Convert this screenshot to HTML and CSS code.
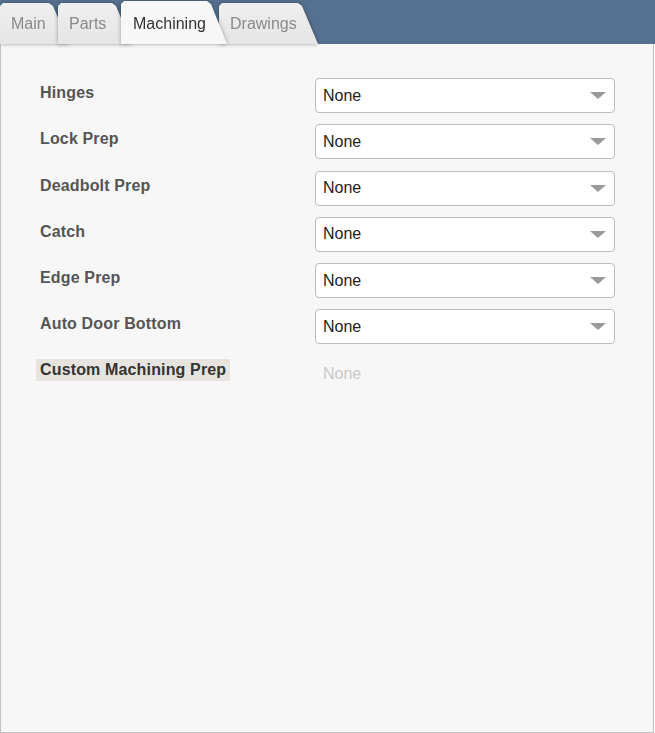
FILE: index.html
```html
<!DOCTYPE html>
<html>
<head>
<meta charset="utf-8">
<link rel="stylesheet" href="styles.css">
</head>
<body>
<div class="page">
  <div class="tabbar">
    <div class="tab-wrap tw-main"><div class="tab">Main</div></div>
    <div class="tab-wrap tw-parts"><div class="tab">Parts</div></div>
    <div class="tab-wrap tw-mach active"><div class="tab">Machining</div></div>
    <div class="tab-wrap tw-draw"><div class="tab">Drawings</div></div>
  </div>
  <div class="panel">
    <div class="form">
      <div class="label">Hinges</div>
      <div class="select"><span>None</span><i class="arrow"></i></div>
      <div class="label">Lock Prep</div>
      <div class="select"><span>None</span><i class="arrow"></i></div>
      <div class="label">Deadbolt Prep</div>
      <div class="select"><span>None</span><i class="arrow"></i></div>
      <div class="label">Catch</div>
      <div class="select"><span>None</span><i class="arrow"></i></div>
      <div class="label">Edge Prep</div>
      <div class="select"><span>None</span><i class="arrow"></i></div>
      <div class="label">Auto Door Bottom</div>
      <div class="select"><span>None</span><i class="arrow"></i></div>
      <div class="label label-hl">Custom Machining Prep</div>
      <div class="static">None</div>
    </div>
  </div>
</div>
</body>
</html>
```
FILE: styles.css
```css
* { box-sizing: border-box; }
html, body { margin: 0; padding: 0; background: #ffffff; }
body { font-family: "Liberation Sans", Arial, sans-serif; }

.page {
  width: 655px;
  height: 733px;
  display: flex;
  flex-direction: column;
}

.tabbar {
  height: 44px;
  flex: none;
  background: #56718f;
  display: flex;
  align-items: flex-end;
}

.tab-wrap {
  position: relative;
  filter: drop-shadow(0 0 2px rgba(0, 0, 0, 0.35));
}
.tw-main { width: 69px; margin-right: -11px; z-index: 1; }
.tw-parts { width: 74px; margin-right: -11px; z-index: 2; }
.tw-mach { width: 106px; margin-right: -8px; z-index: 10; }
.tw-draw { width: 99px; z-index: 3; }

.tab {
  height: 41px;
  padding: 12px 0 0 11px;
  font-size: 16px;
  line-height: 18px;
  color: #8a8a8a;
  background: linear-gradient(#efefef, #e5e5e5);
  clip-path: polygon(0 3px, 3px 0, calc(100% - 20px) 0, calc(100% - 16px) 3px, 100% 100%, 0 100%);
}
.active .tab {
  height: 43px;
  padding: 14px 0 0 12px;
  color: #333333;
  background: #f7f7f7;
}

.panel {
  flex: 1;
  width: 654px;
  background: #f7f7f7;
  border: 1px solid #c2c2c2;
  border-top: none;
}

.form {
  padding: 34px 0 0 35px;
  display: grid;
  grid-template-columns: 279px 300px;
  grid-auto-rows: auto;
  row-gap: 11.25px;
}

.label {
  justify-self: start;
  align-self: start;
  margin-top: 4px;
  padding: 2px 4px;
  font-size: 16px;
  line-height: 18px;
  font-weight: bold;
  letter-spacing: 0.15px;
  color: #555555;
}
.label-hl {
  margin-top: 3px;
  background: #e7e4df;
  color: #333333;
}

.select {
  height: 35px;
  background: #ffffff;
  border: 1px solid #bcbcbc;
  border-radius: 4px;
  padding: 0 8px 0 7px;
  display: flex;
  align-items: center;
  justify-content: space-between;
  font-size: 16px;
  color: #222222;
}

.arrow {
  width: 0;
  height: 0;
  border-left: 8px solid transparent;
  border-right: 8px solid transparent;
  border-top: 7px solid #9a9a9a;
}

.static {
  padding: 9px 0 0 8px;
  font-size: 16px;
  line-height: 18px;
  color: #c9c9c9;
}
```
